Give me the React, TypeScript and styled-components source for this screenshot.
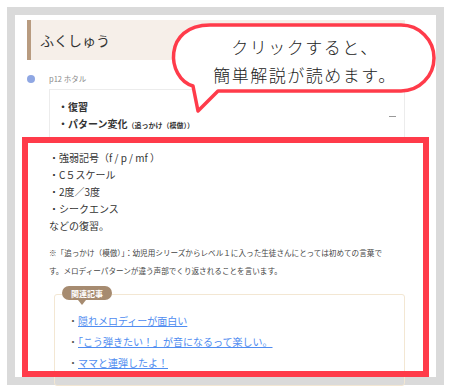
import styled, { createGlobalStyle } from "styled-components";

const GlobalStyle = createGlobalStyle`
  body {
    margin: 0;
    background: #fff;
    font-family: "Noto Sans CJK JP", "Noto Sans", sans-serif;
    color: #333;
    overflow: hidden;
  }
`;

const Page = styled.div`
  position: relative;
  width: 450px;
  height: 387px;
  overflow: hidden;
`;

const Frame = styled.div`
  margin: 7px 0 0 7px;
  width: 421px;
  height: 362px;
  border: 8px solid #dadada;
  background: #fff;
`;

const Column = styled.div`
  padding: 5px 31px 0 12px;
`;

const Heading = styled.h2`
  margin: 0;
  height: 40px;
  display: flex;
  align-items: center;
  padding-left: 9px;
  border-left: 4px solid #b89b80;
  background: #f6efe9;
  font-size: 14px;
  font-weight: 400;
  color: #333;
`;

const TimelineItem = styled.div`
  display: grid;
  grid-template-columns: 22px 1fr;
  margin-top: 13px;
`;

const Dot = styled.span`
  width: 8px;
  height: 8px;
  border-radius: 50%;
  background: #8fa7e3;
  margin-top: 2px;
`;

const Body = styled.div``;

const Label = styled.div`
  font-size: 7.5px;
  line-height: 12px;
  color: #888;
  margin-bottom: 4px;
`;

const AccHeader = styled.div`
  display: flex;
  align-items: center;
  justify-content: space-between;
  border: 1px solid #ececec;
  padding: 8px;
`;

const AccTitle = styled.div`
  font-size: 10px;
  font-weight: 700;
  line-height: 17px;
  color: #333;
`;

const Small = styled.span`
  font-size: 7px;
`;

const Minus = styled.span`
  width: 7px;
  height: 1px;
  background: #999;
`;

const Content = styled.div`
  margin-top: 6px;
  font-size: 10px;
  line-height: 17px;
  color: #333;
`;

const Note = styled.p`
  margin: 10px 0 0;
  font-size: 7.6px;
  line-height: 18px;
  color: #444;
  white-space: nowrap;
`;

const Related = styled.div`
  position: relative;
  margin: 14px 0 0 5px;
  border: 1px solid #f3e7d3;
  border-radius: 3px;
  padding: 15px 0 12px 13px;
`;

const Badge = styled.span`
  position: absolute;
  left: 7px;
  top: -9px;
  width: 50px;
  height: 14px;
  border-radius: 7px;
  background: #a68b70;
  color: #fff;
  font-size: 8px;
  font-weight: 700;
  display: flex;
  align-items: center;
  justify-content: center;
  &::after {
    content: "";
    position: absolute;
    left: 16px;
    bottom: -5px;
    border-left: 4px solid transparent;
    border-right: 4px solid transparent;
    border-top: 5px solid #a68b70;
  }
`;

const LinkList = styled.ul`
  margin: 0;
  padding: 0;
  list-style: none;
  font-size: 10px;
  line-height: 21px;
  color: #555;
`;

const LinkItem = styled.li``;

const Link = styled.a`
  color: #4f8cf0;
  text-decoration: underline;
`;

const Highlight = styled.div`
  position: absolute;
  left: 22px;
  top: 137px;
  width: 407px;
  height: 240px;
  box-sizing: border-box;
  border: 6px solid #ff3b4a;
  pointer-events: none;
`;

const Bubble = styled.div`
  position: absolute;
  left: 174px;
  top: 23px;
  width: 262px;
  height: 68px;
  padding-top: 10px;
  box-sizing: border-box;
  text-align: center;
  font-size: 17px;
  line-height: 28px;
  letter-spacing: 1.5px;
  color: #222;
  font-weight: 300;
`;

const BubbleShape = styled.svg`
  position: absolute;
  left: 0;
  top: 0;
  overflow: visible;
`;

const BubbleText = styled.div`
  position: relative;
`;

const notes = ["強弱記号（f / p / mf ）", "C５スケール", "2度／3度", "シークエンス"];
const links = [
  "隠れメロディーが面白い",
  "「こう弾きたい！」が音になるって楽しい。",
  "ママと連弾したよ！",
];

export default function App() {
  return (
    <Page>
      <GlobalStyle />
      <Frame>
        <Column>
          <Heading>ふくしゅう</Heading>
          <TimelineItem>
            <Dot />
            <Body>
              <Label>p12 ホタル</Label>
              <AccHeader>
                <AccTitle>
                  ・復習
                  <br />
                  ・パターン変化<Small>（追っかけ（模倣））</Small>
                </AccTitle>
                <Minus />
              </AccHeader>
              <Content>
                {notes.map((n) => (
                  <div key={n}>・{n}</div>
                ))}
                <div>などの復習。</div>
              </Content>
              <Note>
                ※「追っかけ（模倣）」：幼児用シリーズからレベル１に入った生徒さんにとっては初めての言葉で
                <br />
                す。メロディーパターンが違う声部でくり返されることを言います。
              </Note>
              <Related>
                <Badge>関連記事</Badge>
                <LinkList>
                  {links.map((l) => (
                    <LinkItem key={l}>
                      ・<Link href="#">{l}</Link>
                    </LinkItem>
                  ))}
                </LinkList>
              </Related>
            </Body>
          </TimelineItem>
        </Column>
      </Frame>
      <Highlight />
      <Bubble>
        <BubbleShape width="262" height="100" viewBox="174 23 262 100">
          <path
            d="M 210 25 H 401 A 33 33 0 0 1 401 91 H 218 L 198 111 L 193 86 C 166 78 163 25 210 25 Z"
            fill="#fff"
            stroke="#ff3b4a"
            strokeWidth="3.5"
            strokeLinejoin="round"
          />
        </BubbleShape>
        <BubbleText>
          クリックすると、
          <br />
          簡単解説が読めます。
        </BubbleText>
      </Bubble>
    </Page>
  );
}
